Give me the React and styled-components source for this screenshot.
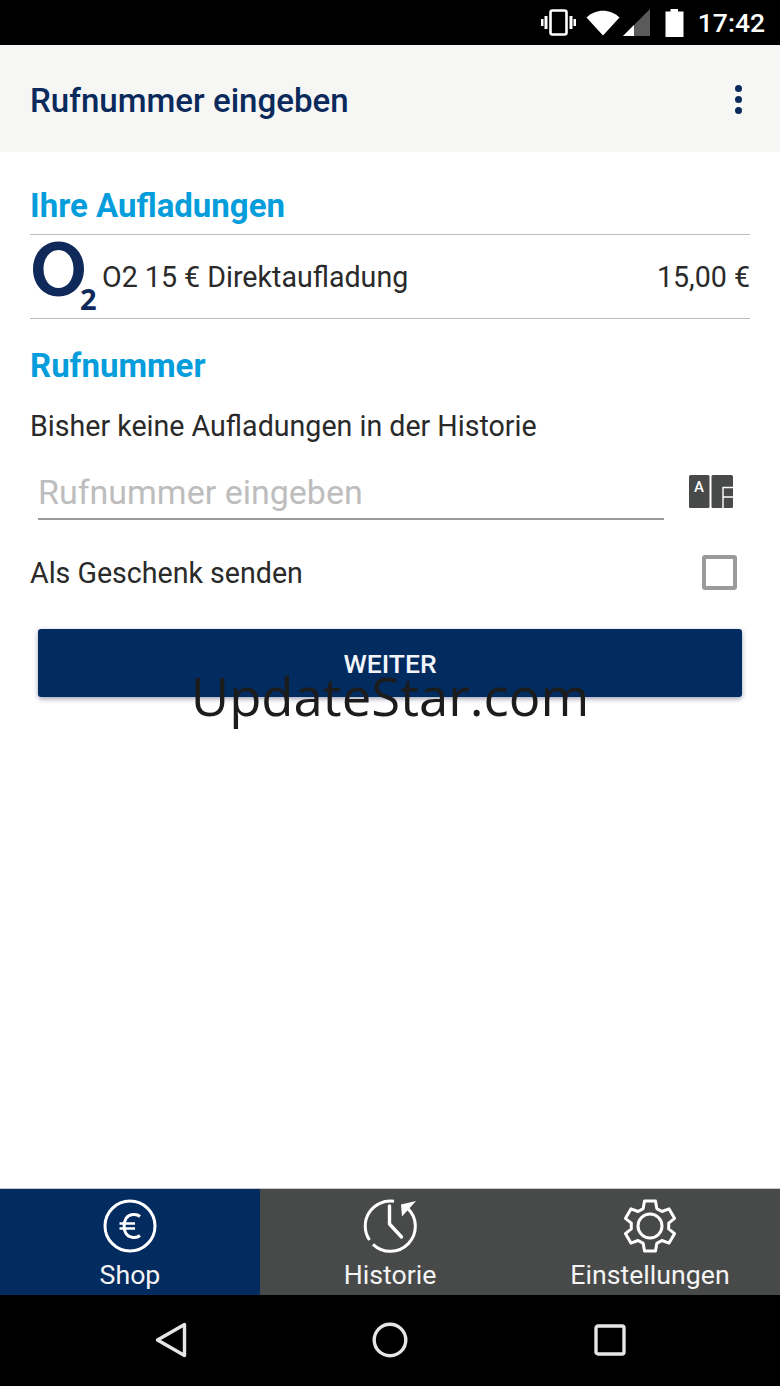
import React from 'react';
import styled, { createGlobalStyle } from 'styled-components';

const GlobalStyle = createGlobalStyle`
  html, body {
    margin: 0;
    padding: 0;
    background: #fff;
  }
  * { box-sizing: border-box; }
`;

const Screen = styled.div`
  position: relative;
  width: 780px;
  height: 1386px;
  display: flex;
  flex-direction: column;
  overflow: hidden;
  background: #fff;
  font-family: Roboto, "Liberation Sans", sans-serif;
  color: #2a2a2a;
`;

// Status bar
const StatusBar = styled.div`
  height: 45px;
  flex: none;
  background: #000;
  display: flex;
  align-items: center;
  justify-content: flex-end;
  padding-right: 15px;
  color: #fff;
`;

const StatusIcon = styled.svg`
  display: block;
  flex: none;
  margin-right: ${props => props.$gap || 0}px;
`;

const Clock = styled.span`
  font-size: 26.5px;
  font-weight: 500;
  margin-left: 14px;
`;

// App bar
const AppBar = styled.div`
  height: 107px;
  flex: none;
  background: #f6f6f5;
  display: flex;
  align-items: center;
  justify-content: space-between;
  padding: 2px 38px 0 30px;
`;

const AppTitle = styled.div`
  font-size: 33.1px;
  font-weight: 500;
  color: #0b2a5c;
  padding-top: 2px;
`;

const MenuDots = styled.div`
  display: flex;
  flex-direction: column;
  gap: 4px;
`;

const Dot = styled.span`
  width: 7px;
  height: 7px;
  border-radius: 50%;
  background: #0b2a5c;
`;

// Content
const Content = styled.div`
  flex: 1;
  padding: 0 30px;
  display: flex;
  flex-direction: column;
`;

const SectionTitle = styled.div`
  font-size: 33px;
  font-weight: 700;
  color: #059ddb;
  line-height: 38px;
  margin-top: ${props => props.$top}px;
`;

const OrderRow = styled.div`
  height: 85px;
  margin-top: 9px;
  padding-top: 1px;
  border-top: 1px solid #bdbdbd;
  border-bottom: 1px solid #bdbdbd;
  display: flex;
  align-items: center;
  font-size: 28.6px;
`;

const LogoWrap = styled.svg`
  display: block;
  flex: none;
  margin: 0 1px 0 1px;
`;

const LogoText = styled.text`
  font-family: "Open Sans", "Noto Sans", sans-serif;
  font-weight: 700;
  fill: #0f2a5a;
`;

const OrderName = styled.span`
  flex: 1;
`;

const BodyText = styled.div`
  font-size: 28.6px;
  line-height: 34px;
  margin-top: 24px;
`;

const PhoneRow = styled.div`
  display: flex;
  align-items: flex-start;
  margin-top: 25px;
  padding-left: 8px;
`;

const PhoneInput = styled.div`
  width: 626px;
  height: 52px;
  border-bottom: 2px solid #9a9a9a;
  font-size: 34px;
  line-height: 48px;
  color: #bdbdbd;
`;

const ContactIcon = styled.svg`
  display: block;
  flex: none;
  margin: 7px 0 0 25px;
`;

const ContactLetter = styled.text`
  font-family: Roboto, "Liberation Sans", sans-serif;
  font-weight: 500;
  fill: #fff;
`;

const GiftRow = styled.div`
  display: flex;
  align-items: center;
  justify-content: space-between;
  margin-top: 17px;
  height: 70px;
  padding-right: 13px;
  font-size: 28.6px;
`;

const GiftLabel = styled.span`
  padding-top: 2px;
`;

const CheckBox = styled.span`
  width: 35px;
  height: 35px;
  border: 4px solid #9b9b9b;
  border-radius: 3px;
`;

const PrimaryButton = styled.button`
  width: 704px;
  height: 68px;
  margin: 22px 0 0 8px;
  flex: none;
  border: 0;
  border-radius: 3px;
  background: #022b60;
  color: #f2f5fa;
  font-family: Roboto, "Liberation Sans", sans-serif;
  font-size: 26.5px;
  font-weight: 500;
  padding: 0;
  box-shadow: 0 2px 5px rgba(20, 30, 70, 0.4);
`;

const Watermark = styled.div`
  position: absolute;
  top: 659px;
  left: 0;
  width: 780px;
  text-align: center;
  font-family: "Open Sans", "Noto Sans", sans-serif;
  font-weight: 400;
  font-size: 52.7px;
  line-height: 74px;
  color: #1c1c1c;
  pointer-events: none;
`;

// Bottom tabs
const TabBar = styled.div`
  height: 107px;
  flex: none;
  display: grid;
  grid-template-columns: repeat(3, 1fr);
  border-top: 1px solid #c9c9c9;
`;

const Tab = styled.div`
  background: ${props => (props.$active ? '#022b60' : '#484a49')};
  color: #f4f4f4;
  display: flex;
  flex-direction: column;
  align-items: center;
  padding-top: 9px;
`;

const TabIcon = styled.svg`
  display: block;
  flex: none;
`;

const TabLabel = styled.span`
  font-size: 26.7px;
  line-height: 32px;
  margin-top: 5px;
`;

// Android nav bar
const NavBar = styled.div`
  height: 91px;
  flex: none;
  background: #000;
  display: grid;
  grid-template-columns: repeat(3, 1fr);
  padding-bottom: 1px;
  align-items: center;
`;

const NavIcon = styled.svg`
  display: block;
  justify-self: ${props => props.$side || 'center'};
  margin-left: ${props => props.$left || 0}px;
  margin-right: ${props => props.$right || 0}px;
`;

const VibrateIcon = () => (
  <StatusIcon width="35" height="28" viewBox="0 0 35 28" $gap={10}>
    <rect x="9.5" y="1.5" width="16" height="24" rx="2" fill="none" stroke="#fff" strokeWidth="2.6" />
    <rect x="3.5" y="7" width="3" height="13" fill="#fff" />
    <rect x="0" y="10" width="2.5" height="7" fill="#fff" />
    <rect x="28.5" y="7" width="3" height="13" fill="#fff" />
    <rect x="32.5" y="10" width="2.5" height="7" fill="#fff" />
  </StatusIcon>
);

const WifiIcon = () => (
  <StatusIcon width="34" height="26" viewBox="0 0 34 26" $gap={3}>
    <path d="M0.5 7.5C9.5 -1.5 24.5 -1.5 33.5 7.5L17 25.5Z" fill="#fff" />
  </StatusIcon>
);

const SignalIcon = () => (
  <StatusIcon width="27" height="28" viewBox="0 0 27 28" $gap={15}>
    <path d="M27 0V27H0Z" fill="#5a5a5a" />
    <path d="M11 16V27H0Z" fill="#fff" />
  </StatusIcon>
);

const BatteryIcon = () => (
  <StatusIcon width="19" height="28" viewBox="0 0 19 28">
    <path d="M5.5 0H13V2.5H18.5V28H0.5V2.5H5.5Z" fill="#fff" />
  </StatusIcon>
);

const O2Logo = () => (
  <LogoWrap width="70" height="76" viewBox="0 0 70 76">
    <path
      fillRule="evenodd"
      transform="translate(1 -1)"
      d="M26.5 3.5C41 3.5 52 15 52 31C52 47 41 58.5 26.5 58.5C12 58.5 1 47 1 31C1 15 12 3.5 26.5 3.5ZM26.5 12C18 12 11.5 20 11.5 31C11.5 42 18 50 26.5 50C35 50 41.5 42 41.5 31C41.5 20 35 12 26.5 12Z"
      fill="#0f2a5a"
    />
    <LogoText x="49" y="71" fontSize="29">2</LogoText>
  </LogoWrap>
);

const KeyboardIcon = () => (
  <ContactIcon width="44" height="34" viewBox="0 0 44 34">
    <rect x="0" y="0" width="20.5" height="33" rx="1.5" fill="#484a49" />
    <rect x="22.5" y="0" width="21.5" height="33" rx="1.5" fill="#484a49" />
    <path d="M44 12.5H34V33M34 22H44" fill="none" stroke="#fff" strokeWidth="1.4" />
    <ContactLetter x="5" y="16.5" fontSize="15">A</ContactLetter>
  </ContactIcon>
);

const ShopIcon = () => (
  <TabIcon width="56" height="56" viewBox="0 0 56 56">
    <circle cx="28" cy="28" r="25" fill="none" stroke="#fff" strokeWidth="3" />
    <path d="M38 18.5C34.5 15.5 27 15.8 24 20.5C21.5 24.5 21.5 31.5 24 35.5C27 40.2 34.5 40.5 38 37.5" fill="none" stroke="#fff" strokeWidth="3" />
    <path d="M17.5 25.5H33M17.5 30.5H33" fill="none" stroke="#fff" strokeWidth="2.6" />
  </TabIcon>
);

const HistoryIcon = () => (
  <TabIcon width="56" height="56" viewBox="0 0 56 56">
    <path d="M45.7 10.3A25 25 0 0 1 11 46.3M7.5 42A25 25 0 0 1 32 3.3" fill="none" stroke="#fff" strokeWidth="3" />
    <path d="M54 3L39 6.5L40 18.5Z" fill="#fff" />
    <path d="M27.5 8V26L39.5 39" fill="none" stroke="#fff" strokeWidth="3.4" strokeLinecap="round" strokeLinejoin="round" />
  </TabIcon>
);

const SettingsIcon = () => (
  <TabIcon width="56" height="56" viewBox="0 0 56 56">
    <circle cx="28" cy="28" r="12" fill="none" stroke="#fff" strokeWidth="3" />
    <path
      d="M22.5 3H33.5L34.8 10.6L39.9 13.5L47.1 10.9L52.6 20.4L46.7 25.1V30.9L52.6 35.6L47.1 45.1L39.9 42.5L34.8 45.4L33.5 53H22.5L21.2 45.4L16.1 42.5L8.9 45.1L3.4 35.6L9.3 30.9V25.1L3.4 20.4L8.9 10.9L16.1 13.5L21.2 10.6Z"
      fill="none"
      stroke="#fff"
      strokeWidth="3"
      strokeLinejoin="round"
    />
  </TabIcon>
);

export default function App() {
  return (
    <Screen>
      <GlobalStyle />
      <StatusBar>
        <VibrateIcon />
        <WifiIcon />
        <SignalIcon />
        <BatteryIcon />
        <Clock>17:42</Clock>
      </StatusBar>

      <AppBar>
        <AppTitle>Rufnummer eingeben</AppTitle>
        <MenuDots>
          <Dot />
          <Dot />
          <Dot />
        </MenuDots>
      </AppBar>

      <Content>
        <SectionTitle $top={35}>Ihre Aufladungen</SectionTitle>
        <OrderRow>
          <O2Logo />
          <OrderName>O2 15 € Direktaufladung</OrderName>
          <span>15,00 €</span>
        </OrderRow>
        <SectionTitle $top={28}>Rufnummer</SectionTitle>
        <BodyText>Bisher keine Aufladungen in der Historie</BodyText>
        <PhoneRow>
          <PhoneInput>Rufnummer eingeben</PhoneInput>
          <KeyboardIcon />
        </PhoneRow>
        <GiftRow>
          <GiftLabel>Als Geschenk senden</GiftLabel>
          <CheckBox />
        </GiftRow>
        <PrimaryButton>WEITER</PrimaryButton>
      </Content>

      <TabBar>
        <Tab $active>
          <ShopIcon />
          <TabLabel>Shop</TabLabel>
        </Tab>
        <Tab>
          <HistoryIcon />
          <TabLabel>Historie</TabLabel>
        </Tab>
        <Tab>
          <SettingsIcon />
          <TabLabel>Einstellungen</TabLabel>
        </Tab>
      </TabBar>

      <NavBar>
        <NavIcon width="32" height="36" viewBox="0 0 32 36" $side="end" $right={73}>
          <path d="M29.5 2.5V33.5L2.5 18Z" fill="none" stroke="#e6e6e6" strokeWidth="3.4" strokeLinejoin="round" />
        </NavIcon>
        <NavIcon width="36" height="36" viewBox="0 0 36 36">
          <circle cx="18" cy="18" r="15.8" fill="none" stroke="#e6e6e6" strokeWidth="3.4" />
        </NavIcon>
        <NavIcon width="32" height="32" viewBox="0 0 32 32" $side="start" $left={74}>
          <rect x="2" y="2" width="28" height="28" rx="2" fill="none" stroke="#e6e6e6" strokeWidth="3.4" />
        </NavIcon>
      </NavBar>

      <Watermark>UpdateStar.com</Watermark>
    </Screen>
  );
}
